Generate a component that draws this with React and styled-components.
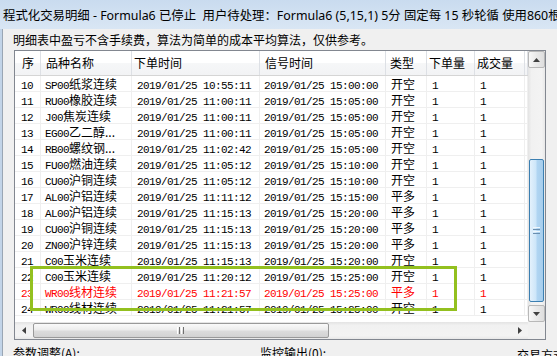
import styled, { createGlobalStyle } from 'styled-components'

const GlobalStyle = createGlobalStyle`
    body {
        margin: 0;
        background: #f0f0f0;
    }
`

const columns = [
    { title: '序', width: 26, headPad: 7, pad: 6 },
    { title: '品种名称', width: 91, headPad: 5, pad: 4 },
    { title: '下单时间', width: 128, headPad: 2, pad: 5 },
    { title: '信号时间', width: 126, headPad: 5, pad: 4 },
    { title: '类型', width: 41, headPad: 4, pad: 5 },
    { title: '下单量', width: 48, headPad: 2, pad: 5 },
    { title: '成交量', width: 50, headPad: 2, pad: 5 },
]

const gridColumns = columns.map(c => `${c.width}px`).join(' ') + ' 1fr'

const trades = [
    ['10', 'SP00', '纸浆连续', '10:55:11', '15:00:00', '开空'],
    ['11', 'RU00', '橡胶连续', '11:00:11', '15:05:00', '开空'],
    ['12', 'J00', '焦炭连续', '11:00:11', '15:05:00', '开空'],
    ['13', 'EG00', '乙二醇...', '11:00:11', '15:05:00', '开空'],
    ['14', 'RB00', '螺纹钢...', '11:02:42', '15:05:00', '开空'],
    ['15', 'FU00', '燃油连续', '11:05:12', '15:10:00', '开空'],
    ['16', 'CU00', '沪铜连续', '11:05:12', '15:10:00', '开空'],
    ['17', 'AL00', '沪铝连续', '11:11:12', '15:15:00', '平多'],
    ['18', 'AL00', '沪铝连续', '11:15:13', '15:20:00', '平多'],
    ['19', 'CU00', '沪铜连续', '11:15:13', '15:20:00', '平多'],
    ['20', 'ZN00', '沪锌连续', '11:15:13', '15:20:00', '平多'],
    ['21', 'C00', '玉米连续', '11:15:13', '15:20:00', '开空'],
    ['22', 'C00', '玉米连续', '11:20:12', '15:25:00', '开空'],
    ['23', 'WR00', '线材连续', '11:21:57', '15:25:00', '平多', true],
    ['24', 'WR00', '线材连续', '11:21:57', '15:25:00', '开空'],
]

const Window = styled.div`
    width: 557px;
    height: 356px;
    overflow: hidden;
    display: flex;
    flex-direction: column;
    background: #f0f0f0;
    font-family: 'Noto Sans', 'Noto Sans CJK SC', sans-serif;
    color: #000;
`

const TitleBar = styled.div`
    flex: none;
    height: 29px;
    display: flex;
    align-items: center;
    padding-left: 3px;
    background: linear-gradient(#c9dbef, #d3e2f2 60%, #d9e6f4);
    font-size: 12.4px;
    white-space: nowrap;
    overflow: hidden;
`

const Frame = styled.div`
    flex: 1;
    display: flex;
    min-height: 0;
`

const Edge = styled.div`
    flex: none;
    width: 2px;
    background: #c2d4e8;
`

const Body = styled.div`
    flex: 1;
    border-left: 1px solid #9aa6b4;
    padding: 2px 0 0 11px;
    min-width: 0;
`

const Notice = styled.div`
    margin-left: -1px;
    height: 18px;
    line-height: 18px;
    font-family: 'Noto Sans CJK SC', sans-serif;
    font-size: 12px;
    white-space: nowrap;
`

const List = styled.div`
    position: relative;
    margin-top: 1px;
    width: 532px;
    height: 290px;
    box-sizing: border-box;
    border: 1px solid #828790;
    background: #fff;
    display: grid;
    grid-template-columns: 513px 17px;
    grid-template-rows: 271px 17px;
`

const Content = styled.div`
    overflow: hidden;
`

const HeaderRow = styled.div`
    display: grid;
    grid-template-columns: ${gridColumns};
    height: 25px;
    box-sizing: border-box;
    border-bottom: 1px solid #d5d5d5;
    background: linear-gradient(#ffffff, #ffffff 50%, #f6f7f8 50%, #f2f3f5);
`

const HeaderCell = styled.div`
    padding-left: ${({ $pad }) => $pad}px;
    border-right: 1px solid #dde0e5;
    font-family: 'Noto Sans CJK SC', sans-serif;
    font-size: 12px;
    line-height: 24px;
    white-space: nowrap;
    overflow: hidden;
`

const Row = styled.div`
    display: grid;
    grid-template-columns: ${gridColumns};
    height: 16px;
    color: ${({ $alert }) => ($alert ? '#ff0000' : '#000')};
`

const Cell = styled.div`
    padding-left: ${({ $pad }) => $pad}px;
    border-right: 1px solid #efefef;
    border-bottom: 1px solid #efefef;
    font-family: 'Noto Sans CJK SC', sans-serif;
    font-size: 12px;
    line-height: 15px;
    white-space: nowrap;
    overflow: hidden;
`

const Code = styled.span`
    font-family: 'Liberation Mono', monospace;
    font-size: 11px;
    letter-spacing: -0.6px;
`

const VScroll = styled.div`
    grid-row: 1;
    grid-column: 2;
    display: flex;
    flex-direction: column;
    background: linear-gradient(to right, #e3e3e3, #f1f1f1 20%, #f3f3f3 80%, #e8e8e8);
`

const HScroll = styled.div`
    grid-row: 2;
    grid-column: 1;
    display: flex;
    background: linear-gradient(#e3e3e3, #f1f1f1 20%, #f3f3f3 80%, #e8e8e8);
`

const Corner = styled.div`
    grid-row: 2;
    grid-column: 2;
    background: #f0f0f0;
`

const ArrowButton = styled.div`
    flex: none;
    width: 17px;
    height: 17px;
    box-sizing: border-box;
    display: flex;
    align-items: center;
    justify-content: center;
    border-radius: 2px;
    border: 1px solid ${({ $boxed }) => ($boxed ? '#b8b8b8' : 'transparent')};
    background: ${({ $boxed }) => ($boxed ? 'linear-gradient(to right, #f8f8f8, #e9e9e9 50%, #dedede)' : 'transparent')};
`

const Track = styled.div`
    flex: 1;
    display: flex;
    flex-direction: ${({ $vertical }) => ($vertical ? 'column' : 'row')};
`

const VThumb = styled.div`
    flex: none;
    margin: ${({ $offset }) => $offset}px 1px 0 1px;
    height: ${({ $size }) => $size}px;
    box-sizing: border-box;
    border: 1px solid #3c7fb1;
    border-radius: 2px;
    background: linear-gradient(to right, #e3f1fc, #cde6f9 45%, #b0d5f2 55%, #a6cdec);
    display: flex;
    align-items: center;
    justify-content: center;
`

const HThumb = styled.div`
    flex: none;
    margin: 1px 0 1px ${({ $offset }) => $offset}px;
    width: ${({ $size }) => $size}px;
    box-sizing: border-box;
    border: 1px solid #999;
    border-radius: 2px;
    background: linear-gradient(#fafafa, #ececec 45%, #dcdcdc 55%, #d2d2d2);
    display: flex;
    align-items: center;
    justify-content: center;
`

const Highlight = styled.div`
    position: absolute;
    left: 15px;
    top: 215px;
    width: 427px;
    height: 45px;
    box-sizing: border-box;
    border: 3px solid #93c01f;
    pointer-events: none;
`

const Footer = styled.div`
    display: grid;
    grid-template-columns: 247px 257px auto;
    margin: 5px 0 0 -1px;
    font-family: 'Noto Sans CJK SC', sans-serif;
    font-size: 12px;
    line-height: 16px;
    white-space: nowrap;
`

const FooterLabel = styled.div`
    padding-top: ${({ $drop }) => $drop || 0}px;
`

const Arrow = ({ dir }) => {
    const points = {
        up: '0,4 3.5,0 7,4',
        down: '0,0 3.5,4 7,0',
        left: '4,0 0,3.5 4,7',
        right: '0,0 4,3.5 0,7',
    }[dir]
    const vertical = dir === 'up' || dir === 'down'
    return (
        <svg width={vertical ? 7 : 4} height={vertical ? 4 : 7}>
            <polygon points={points} fill="#404040" />
        </svg>
    )
}

const Grip = ({ vertical }) => (
    <svg width={vertical ? 7 : 8} height={vertical ? 8 : 7}>
        {[0, 2, 4, 6].map(i =>
            vertical
                ? <line key={i} x1="0" x2="7" y1={i + 0.5} y2={i + 0.5} stroke={i % 4 ? '#6a8fb0' : '#eef6fc'} />
                : <line key={i} y1="0" y2="7" x1={i + 0.5} x2={i + 0.5} stroke={i % 4 ? '#707070' : '#ffffff'} />
        )}
    </svg>
)

const TradeRow = ({ trade }) => {
    const [no, code, name, order, signal, type, alert] = trade
    const values = [
        <Code>{no}</Code>,
        <><Code>{code}</Code>{name}</>,
        <Code>2019/01/25 {order}</Code>,
        <Code>2019/01/25 {signal}</Code>,
        type,
        <Code>1</Code>,
        <Code>1</Code>,
    ]
    return (
        <Row $alert={alert}>
            {values.map((value, i) => (
                <Cell key={i} $pad={columns[i].pad}>{value}</Cell>
            ))}
            <Cell $pad={0} />
        </Row>
    )
}

const App = () => {
    return (
        <Window>
            <GlobalStyle />
            <TitleBar>程式化交易明细 - Formula6 已停止&nbsp;&nbsp;用户待处理：Formula6 (5,15,1) 5分 固定每 15 秒轮循 使用860根K线数据</TitleBar>
            <Frame>
                <Edge />
                <Body>
                    <Notice>明细表中盈亏不含手续费，算法为简单的成本平均算法，仅供参考。</Notice>
                    <List>
                        <Content>
                            <HeaderRow>
                                {columns.map(c => (
                                    <HeaderCell key={c.title} $pad={c.headPad}>{c.title}</HeaderCell>
                                ))}
                                <HeaderCell $pad={0} />
                            </HeaderRow>
                            {trades.map(t => <TradeRow key={t[0]} trade={t} />)}
                        </Content>
                        <VScroll>
                            <ArrowButton $boxed><Arrow dir="up" /></ArrowButton>
                            <Track $vertical>
                                <VThumb $offset={91} $size={143}><Grip vertical /></VThumb>
                            </Track>
                            <ArrowButton $boxed><Arrow dir="down" /></ArrowButton>
                        </VScroll>
                        <HScroll>
                            <ArrowButton><Arrow dir="left" /></ArrowButton>
                            <Track>
                                <HThumb $offset={1} $size={296}><Grip /></HThumb>
                            </Track>
                            <ArrowButton><Arrow dir="right" /></ArrowButton>
                        </HScroll>
                        <Corner />
                        <Highlight />
                    </List>
                    <Footer>
                        <FooterLabel>参数调整(A):</FooterLabel>
                        <FooterLabel>监控输出(0):</FooterLabel>
                        <FooterLabel $drop={2}>交易方式</FooterLabel>
                    </Footer>
                </Body>
            </Frame>
        </Window>
    )
}

export default App
